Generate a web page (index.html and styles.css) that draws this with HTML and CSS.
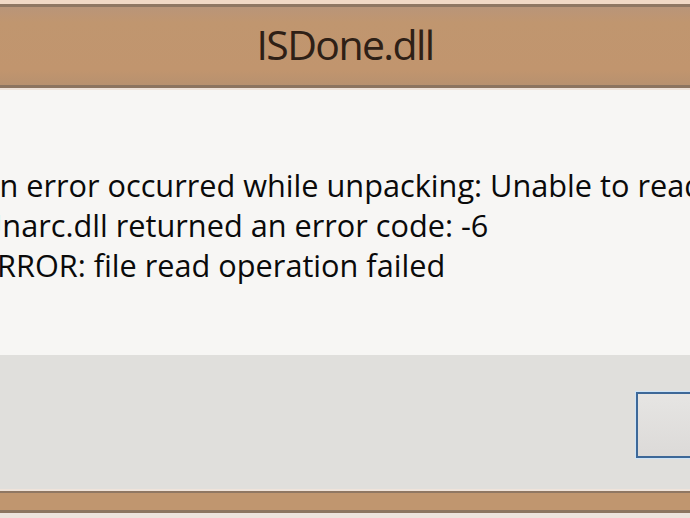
FILE: index.html
```html
<!DOCTYPE html>
<html lang="en">
<head>
    <meta charset="UTF-8">
    <meta name="viewport" content="width=device-width, initial-scale=1.0">
    <title>ISDone.dll</title>
    <link rel="stylesheet" href="styles.css">
</head>
<body>
    <div class="window">
        <div class="frame-edge"></div>
        <div class="titlebar">
            <span class="title">ISDone.dll</span>
        </div>
        <div class="frame-gap"></div>

        <div class="content">
            <div class="message">
                <p>An error occurred while unpacking: Unable to read data!</p>
                <p>Unarc.dll returned an error code: -6</p>
                <p>ERROR: file read operation failed</p>
            </div>
        </div>

        <div class="footer">
            <button class="btn" type="button">OK</button>
        </div>

        <div class="frame-gap"></div>
        <div class="taskbar"></div>
    </div>
</body>
</html>
```

FILE: styles.css
```css
body {
    margin: 0;
    overflow: hidden;
    background-color: #ede3dd;
    font-family: "Open Sans", "Noto Sans", sans-serif;
}
.window {
    width: 690px;
    overflow: hidden;
}
.frame-edge {
    height: 4px;
    background-color: #f1d9c6;
}
.titlebar {
    height: 78px;
    display: flex;
    align-items: center;
    justify-content: center;
    border-top: 3px solid #8f7763;
    border-bottom: 3px solid #8c7460;
    background: linear-gradient(#b99579, #c0966f 20%, #c1956e 80%, #b8916f);
}
.title {
    font-size: 41px;
    color: #2e2016;
    letter-spacing: -1.6px;
    margin-top: -4px;
}
.frame-gap {
    height: 2px;
    background-color: #efe3da;
}
.content {
    height: 265px;
    background-color: #f7f6f4;
    padding-top: 75px;
    box-sizing: border-box;
}
.message {
    margin-left: -20px;
    white-space: nowrap;
    font-size: 30.7px;
    color: #0a0a0a;
}
.message p {
    margin: 0;
    line-height: 40px;
}
.footer {
    height: 134px;
    background-color: #e0dfdc;
    padding-top: 37px;
    padding-left: 636px;
    box-sizing: border-box;
}
.btn {
    width: 150px;
    height: 66px;
    border: 2px solid #3d6898;
    box-shadow: 0 0 0 1px #cde4f8;
    background: linear-gradient(#e6e5e3, #dcdad8);
    font-family: "Open Sans", sans-serif;
    font-size: 28px;
    color: #141414;
}
.taskbar {
    height: 17px;
    border-top: 2px solid #8f7763;
    border-bottom: 3px solid #8c7460;
    background-color: #c0966f;
}
```
